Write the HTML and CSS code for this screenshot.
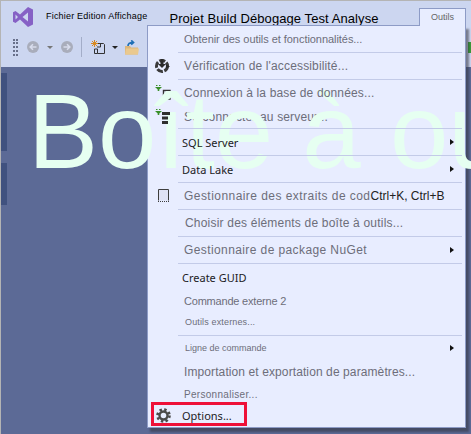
FILE: index.html
```html
<!DOCTYPE html>
<html lang="fr">
<head>
    <meta charset="UTF-8">
    <title>Outils</title>
    <link rel="stylesheet" href="styles.css">
</head>
<body>
    <div class="window">
        <div class="header">
            <div class="menubar">
                <svg class="logo" width="20" height="20" viewBox="0 0 20 20">
                    <path fill="#8661c5" fill-rule="evenodd" d="M15 0L20 2.5V17.5L15 20L7 12.5L2.5 16L0 14.7V5.3L2.5 4L7 7.5ZM15 5.5L9.5 10L15 14.5ZM2.5 7.5V12.5L5 10Z"/>
                </svg>
                <span class="menu-small">Fichier Edition Affichage</span>
                <span class="menu-large">Projet Build Débogage Test Analyse</span>
            </div>
            <div class="toolbar">
                <span class="grip"></span>
                <svg class="nav-back" width="12" height="12" viewBox="0 0 12 12">
                    <circle cx="6" cy="6" r="6" fill="#a9adbb"/>
                    <path d="M9.5 6H3.5M6 3.2L3.2 6L6 8.8" fill="none" stroke="#d8dcec" stroke-width="1.6"/>
                </svg>
                <span class="caret caret-grey"></span>
                <svg class="nav-forward" width="12" height="12" viewBox="0 0 12 12">
                    <circle cx="6" cy="6" r="6" fill="#a9adbb"/>
                    <path d="M2.5 6H8.5M6 3.2L8.8 6L6 8.8" fill="none" stroke="#d8dcec" stroke-width="1.6"/>
                </svg>
                <span class="tool-sep"></span>
                <svg class="new-project" width="14" height="14" viewBox="0 0 14 14">
                    <path d="M5.5 3.5H12.5L13.5 4.5V13.5H6.5V9H3.5V13.5H6.5" fill="none" stroke="#333" stroke-width="1"/>
                    <path d="M9.5 3.5V7H6" fill="none" stroke="#333" stroke-width="1"/>
                    <path d="M3.5 0V7M0 3.5H7M1 1L6 6M6 1L1 6" stroke="#d98a1f" stroke-width="1"/>
                </svg>
                <span class="caret"></span>
                <svg class="open-folder" width="14" height="15" viewBox="0 0 14 15">
                    <path d="M0 6H5L6 7.5H13V14.5H0Z" fill="#dcb67a"/>
                    <path d="M1 8.5H14L13 14.5H0Z" fill="#eac98f"/>
                    <path d="M3 6C3 3 5 2.5 8 2.5M6.2 0.4L8.5 2.5L6.2 4.6" fill="none" stroke="#1e6fb5" stroke-width="1.7"/>
                </svg>
                <span class="tool-green"></span>
            </div>
        </div>
        <div class="content">
            <span class="side-tab side-tab-long"></span>
            <span class="side-tab side-tab-short"></span>
        </div>

        <div class="big-title">Boîte à outils</div>

        <div class="menu">
            <div class="tab">Outils</div>

            <div class="row row-26"><span class="slot"></span><span class="label t-11 tight-05">Obtenir des outils et fonctionnalités...</span></div>
            <div class="sep"></div>
            <div class="row row-26">
                <span class="slot">
                    <svg width="16" height="16" viewBox="0 0 16 16">
                        <circle cx="7" cy="8" r="5.5" fill="none" stroke="#3a3a3a" stroke-width="3" stroke-dasharray="6 1.5"/>
                        <path d="M5.5 1H8.5V6H11L7 10L3 6H5.5Z" fill="#2a2a2a"/>
                        <path d="M11 6.5L15 8.5L11 10.5Z" fill="#2a2a2a"/>
                    </svg>
                </span>
                <span class="label t-12 wide-15">Vérification de l'accessibilité...</span>
            </div>
            <div class="sep"></div>
            <div class="row row-connect">
                <span class="slot">
                    <svg width="16" height="16" viewBox="0 0 16 16">
                        <path d="M1 0H2.5V1H1ZM4 0H5.5V1H4ZM0 2H7L4.3 4.5V6H2.7V4.5Z" fill="#3a8f2a"/>
                        <path d="M8.5 5.5H15V14H8.5Z" fill="none" stroke="#333" stroke-width="1.4"/>
                    </svg>
                </span>
                <span class="label t-12 wide-15 over">Connexion à la base de données...</span>
            </div>
            <div class="row row-server">
                <span class="slot over">
                    <svg width="16" height="16" viewBox="0 0 16 16">
                        <path d="M1 0H2.5V1H1ZM4 0H5.5V1H4ZM0 2H7L4.3 4.5V6H2.7V4.5Z" fill="#3a8f2a"/>
                        <path d="M7 3H15V6H7ZM7 7.5H13V10.5H7ZM7 12H13V15H7Z" fill="#2e2e2e"/>
                    </svg>
                </span>
                <span class="label t-12 wide-15">Se connecter au serveur...</span>
            </div>
            <div class="sep over"></div>
            <div class="row row-26 over"><span class="slot"></span><span class="label label-dark">SQL Server</span><span class="arrow"></span></div>
            <div class="sep over"></div>
            <div class="row row-26 over"><span class="slot"></span><span class="label label-dark">Data Lake</span><span class="arrow"></span></div>
            <div class="sep"></div>
            <div class="row row-26">
                <span class="slot">
                    <svg width="13" height="14" viewBox="0 0 13 14">
                        <path d="M1.5 11.5V0.5H11.5V11.5" fill="#dfe2f4" stroke="#3d3d3d" stroke-width="1"/>
                        <path d="M1 12.5H12" stroke="#3d3d3d" stroke-width="1" stroke-dasharray="1 1"/>
                    </svg>
                </span>
                <span class="label t-12 wide-45">Gestionnaire des extraits de cod</span><span class="shortcut">Ctrl+K, Ctrl+B</span>
            </div>
            <div class="sep"></div>
            <div class="row row-26"><span class="slot"></span><span class="label label-shift t-12 wide-20">Choisir des éléments de boîte à outils...</span></div>
            <div class="sep"></div>
            <div class="row row-26"><span class="slot"></span><span class="label t-12 wide-40">Gestionnaire de package NuGet</span><span class="arrow"></span></div>
            <div class="sep"></div>
            <div class="row row-26"><span class="slot"></span><span class="label label-dark">Create GUID</span></div>
            <div class="row row-22"><span class="slot"></span><span class="label t-11 tight-20">Commande externe 2</span></div>
            <div class="row row-outils"><span class="slot"></span><span class="label label-shift t-9 wide-15">Outils externes...</span></div>
            <div class="sep"></div>
            <div class="row row-24"><span class="slot"></span><span class="label label-shift t-9">Ligne de commande</span><span class="arrow"></span></div>
            <div class="row row-24"><span class="slot"></span><span class="label t-12 wide-10">Importation et exportation de paramètres...</span></div>
            <div class="row row-21"><span class="slot"></span><span class="label t-10 wide-30">Personnaliser...</span></div>
            <div class="row row-options">
                <span class="slot">
                    <svg width="15" height="15" viewBox="0 0 15 15">
                        <circle cx="7.5" cy="7.5" r="6" fill="none" stroke="#4a4a4a" stroke-width="2.6" stroke-dasharray="2.4 2.31"/>
                        <circle cx="7.5" cy="7.5" r="4" fill="none" stroke="#4a4a4a" stroke-width="2.4"/>
                    </svg>
                </span>
                <span class="label label-dark">Options...</span>
            </div>

            <div class="highlight"></div>
        </div>
    </div>
</body>
</html>
```

FILE: styles.css
```css
* {
    margin: 0;
    padding: 0;
    box-sizing: border-box;
}
body {
    font-family: "Liberation Sans", Arial, sans-serif;
}
.window {
    position: relative;
    width: 471px;
    height: 434px;
    overflow: hidden;
    display: flex;
    flex-direction: column;
    border-top: 1px solid #b4b4b4;
    border-left: 1px solid #b4b4b4;
    background-color: #5c6a96;
}
.header {
    height: 66px;
    background-color: #ccd6f0;
}
.menubar {
    height: 32px;
    display: flex;
    align-items: center;
    padding-left: 12px;
    color: #000;
}
.menu-small {
    margin-left: 13px;
    margin-bottom: 2px;
    font-size: 9px;
    letter-spacing: 0.2px;
}
.menu-large {
    margin-left: 22px;
    margin-top: 2px;
    font-size: 13px;
    letter-spacing: 0.08px;
}
.toolbar {
    height: 34px;
    display: flex;
    align-items: center;
    padding-left: 12px;
    padding-bottom: 6px;
}
.grip {
    width: 5px;
    height: 17px;
    border-left: 2px dotted #68708a;
    border-right: 2px dotted #68708a;
}
.nav-back {
    margin-left: 9px;
}
.caret {
    width: 0;
    height: 0;
    margin-left: 7px;
    border-left: 3px solid transparent;
    border-right: 3px solid transparent;
    border-top: 3px solid #222;
}
.caret-grey {
    margin-left: 8px;
    border-top-color: #777;
}
.nav-forward {
    margin-left: 8px;
}
.tool-sep {
    width: 1px;
    height: 20px;
    margin-left: 8px;
    background-color: #a3adc8;
}
.new-project {
    margin-left: 9px;
}
.open-folder {
    margin-left: 7px;
}
.tool-green {
    width: 3px;
    height: 11px;
    margin-left: auto;
    background-color: #3a9a3a;
}
.content {
    flex: 1;
    display: flex;
    flex-direction: column;
    gap: 12px;
    padding-top: 6px;
}
.side-tab {
    width: 6px;
    background-color: #40517f;
}
.side-tab-long {
    height: 78px;
}
.side-tab-short {
    height: 42px;
}
.big-title {
    position: absolute;
    left: 27px;
    top: 78px;
    z-index: 1;
    font-size: 105px;
    line-height: 1;
    white-space: nowrap;
    color: #e6fff1;
}
.menu {
    position: absolute;
    left: 146px;
    top: 24px;
    width: 319px;
    height: 403px;
    display: flex;
    flex-direction: column;
    border: 1px solid #8d9bc6;
    background-color: #e8edff;
    box-shadow: 3px 4px 2px rgba(50, 50, 60, 0.55);
}
.tab {
    position: absolute;
    top: -18px;
    right: -1px;
    width: 47px;
    height: 18px;
    padding-top: 3px;
    text-align: center;
    font-size: 9px;
    color: #666;
    border: 1px solid #8d9bc6;
    border-bottom: none;
    background-color: #e8edff;
}
.row {
    display: flex;
    align-items: center;
    color: #6d6e7a;
}
.row-26 {
    height: 26px;
}
.row-24 {
    height: 24px;
}
.row-22 {
    height: 22px;
}
.row-21 {
    height: 21px;
}
.row-connect {
    height: 25px;
}
.row-server {
    height: 23px;
}
.row-outils {
    height: 23px;
    padding-bottom: 3px;
}
.row-options {
    height: 22px;
    padding-bottom: 1px;
}
.over {
    position: relative;
    z-index: 2;
}
.slot {
    width: 30px;
    flex-shrink: 0;
    display: flex;
    justify-content: center;
    align-items: center;
}
.label {
    margin-left: 6px;
    white-space: nowrap;
}
.label-shift {
    margin-left: 7px;
}
.label-dark {
    margin-left: 4px;
    font-family: "Noto Sans", sans-serif;
    font-size: 11px;
    color: #1c1c24;
}
.t-12 {
    font-size: 12px;
}
.t-11 {
    font-size: 11px;
}
.t-10 {
    font-size: 10px;
}
.t-9 {
    font-size: 9px;
}
.tight-05 {
    letter-spacing: -0.05px;
}
.tight-20 {
    letter-spacing: -0.2px;
}
.wide-10 {
    letter-spacing: 0.1px;
}
.wide-15 {
    letter-spacing: 0.15px;
}
.wide-20 {
    letter-spacing: 0.2px;
}
.wide-30 {
    letter-spacing: 0.3px;
}
.wide-40 {
    letter-spacing: 0.4px;
}
.wide-45 {
    letter-spacing: 0.45px;
}
.shortcut {
    font-size: 12px;
    color: #222;
}
.arrow {
    width: 0;
    height: 0;
    margin-left: auto;
    margin-right: 11px;
    border-top: 3.5px solid transparent;
    border-bottom: 3.5px solid transparent;
    border-left: 4px solid #111;
}
.sep {
    height: 1px;
    margin-left: 30px;
    margin-right: 3px;
    background-color: #c3cbe8;
}
.highlight {
    position: absolute;
    left: 3px;
    bottom: 1px;
    width: 96px;
    height: 24px;
    border: 3px solid #ee1038;
    z-index: 3;
}
```
